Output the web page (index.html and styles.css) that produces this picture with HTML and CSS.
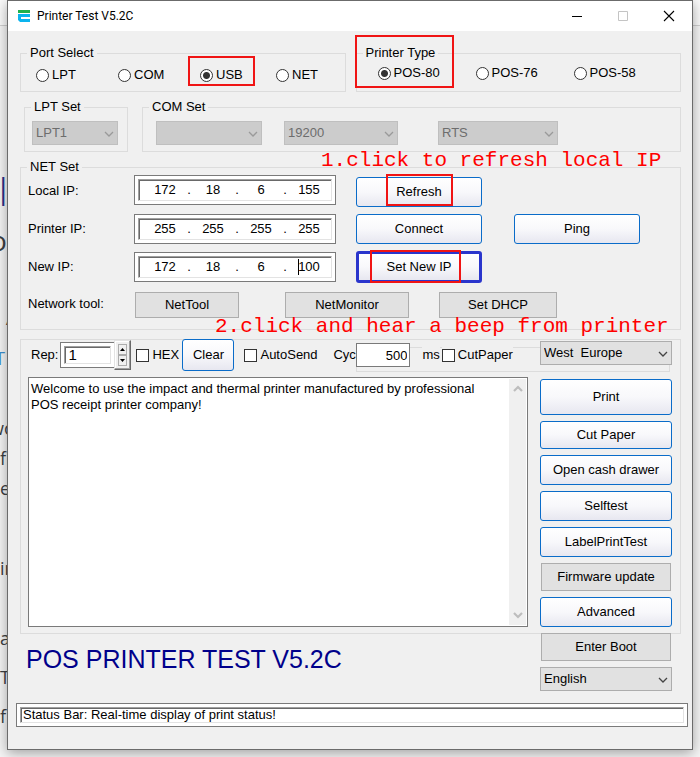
FILE: index.html
```html
<!DOCTYPE html>
<html lang="en">
<head>
<meta charset="utf-8">
<title>Printer Test V5.2C</title>
<link rel="stylesheet" href="styles.css">
</head>
<body>
<svg class="defs" aria-hidden="true">
  <symbol id="chevron" viewBox="0 0 10 6"><path d="M1 1l4 4 4-4" fill="none" stroke="currentColor" stroke-width="1.3"/></symbol>
  <symbol id="thick-chevron" viewBox="0 0 10 7"><path d="M1 1l4 4 4-4" fill="none" stroke="currentColor" stroke-width="2.2"/></symbol>
</svg>

<div class="backdrop" aria-hidden="true">
  <div class="backdrop-top"></div>
  <p class="heading">|</p>
  <p class="large">o</p>
  <p class="slash">A</p>
  <p class="link">T</p>
  <p class="para">wo<br>fi<br>e</p>
  <p class="para">in</p>
  <p class="short">a</p>
  <p class="short">T’</p>
  <p>f</p>
</div>

<main class="window">
  <header class="titlebar">
    <svg class="app-icon" viewBox="0 0 12 12" aria-hidden="true">
      <path fill="#22b14c" d="M0 0h12v3H0z"/>
      <path fill="#0cb4ee" d="M0 4h12v3H3v2h9v3H2L0 10z"/>
    </svg>
    <h1>Printer Test V5.2C</h1>
    <div class="window-buttons">
      <button type="button" aria-label="Minimize"><svg viewBox="0 0 10 10"><path d="M0 5.5h10" stroke="#000"/></svg></button>
      <button type="button" aria-label="Maximize" disabled><svg viewBox="0 0 10 10"><path d="M.5.5h9v9h-9z" fill="none" stroke="#c4c4c4"/></svg></button>
      <button type="button" aria-label="Close"><svg viewBox="0 0 10 10"><path d="M0 0l10 10M10 0L0 10" stroke="#000" stroke-width="1.1"/></svg></button>
    </div>
  </header>

  <form class="content">
    <div class="row-ports">
      <fieldset>
        <legend>Port Select</legend>
        <div class="radios ports">
          <label><input type="radio" name="port">LPT</label>
          <label><input type="radio" name="port">COM</label>
          <label><input type="radio" name="port" checked>USB<span class="mark mark-usb"></span></label>
          <label><input type="radio" name="port">NET</label>
        </div>
      </fieldset>
      <fieldset class="printer-type">
        <legend>Printer Type</legend>
        <div class="radios types">
          <label><input type="radio" name="type" checked>POS-80</label>
          <label><input type="radio" name="type">POS-76</label>
          <label><input type="radio" name="type">POS-58</label>
        </div>
        <span class="mark mark-type"></span>
      </fieldset>
    </div>

    <div class="row-sets">
      <fieldset class="lpt-set">
        <legend>LPT Set</legend>
        <div class="combos">
          <span class="combo w-lpt"><select aria-label="LPT port" disabled><option>LPT1</option></select><svg><use href="#chevron"/></svg></span>
        </div>
      </fieldset>
      <fieldset class="com-set">
        <legend>COM Set</legend>
        <div class="combos">
          <span class="combo w-com"><select aria-label="COM port" disabled><option></option></select><svg><use href="#chevron"/></svg></span>
          <span class="combo w-baud"><select aria-label="Baud rate" disabled><option>19200</option></select><svg><use href="#chevron"/></svg></span>
          <span class="combo w-flow"><select aria-label="Flow control" disabled><option>RTS</option></select><svg><use href="#chevron"/></svg></span>
        </div>
      </fieldset>
    </div>

    <fieldset class="net-set">
      <legend>NET Set</legend>
      <div class="net-rows">
        <div class="net-row first">
          <label for="local-ip">Local IP:</label>
          <div class="sunken ip"><div class="well">
            <input id="local-ip" value="172"><i>.</i><input aria-label="Local IP, part 2" value="18"><i>.</i><input aria-label="Local IP, part 3" value="6"><i>.</i><input aria-label="Local IP, part 4" value="155">
          </div></div>
          <button type="button" class="btn wide">Refresh<span class="mark mark-refresh"></span></button>
        </div>
        <div class="net-row">
          <label for="printer-ip">Printer IP:</label>
          <div class="sunken ip"><div class="well">
            <input id="printer-ip" value="255"><i>.</i><input aria-label="Printer IP, part 2" value="255"><i>.</i><input aria-label="Printer IP, part 3" value="255"><i>.</i><input aria-label="Printer IP, part 4" value="255">
          </div></div>
          <button type="button" class="btn wide">Connect</button>
          <button type="button" class="btn wide ping">Ping</button>
        </div>
        <div class="net-row">
          <label for="new-ip">New IP:</label>
          <div class="sunken ip"><div class="well">
            <input id="new-ip" value="172"><i>.</i><input aria-label="New IP, part 2" value="18"><i>.</i><input aria-label="New IP, part 3" value="6"><i>.</i><input aria-label="New IP, part 4" value="100"><span class="caret"></span>
          </div></div>
          <button type="button" class="btn wide focused">Set New IP<span class="mark mark-set"></span></button>
        </div>
        <div class="net-row tools">
          <span class="tool-label">Network tool:</span>
          <button type="button" class="btn flat nettool">NetTool</button>
          <button type="button" class="btn flat netmonitor">NetMonitor</button>
          <button type="button" class="btn flat dhcp">Set DHCP</button>
        </div>
      </div>
      <p class="note note-1">1.click to refresh local IP</p>
      <p class="note note-2">2.click and hear a beep from printer</p>
    </fieldset>

    <section class="workspace">
      <div class="frame"></div>
      <div class="editor">
        <div class="toolbar">
          <div class="cycle-frame"></div>
          <label for="rep">Rep:</label>
          <div class="rep">
            <div class="sunken"><div class="well"><input id="rep" value="1"></div></div>
            <div class="spinner">
              <button type="button" aria-label="Increase"><svg viewBox="0 0 5 3"><path d="M0 3h5L2.500 0z"/></svg></button>
              <button type="button" aria-label="Decrease"><svg viewBox="0 0 5 3"><path d="M0 0h5L2.500 3z"/></svg></button>
            </div>
          </div>
          <label class="check hex"><input type="checkbox">HEX</label>
          <button type="button" class="btn clear">Clear</button>
          <label class="check autosend"><input type="checkbox">AutoSend</label>
          <label for="cyc" class="cyc-label">Cyc</label>
          <input id="cyc" class="cyc" value="500">
          <span class="ms">ms</span>
          <label class="check cutpaper"><input type="checkbox">CutPaper</label>
        </div>
        <div class="memo">
          <textarea aria-label="Print text">Welcome to use the impact and thermal printer manufactured by professional
POS receipt printer company!</textarea>
          <div class="scroll"><svg class="up"><use href="#thick-chevron"/></svg><svg><use href="#thick-chevron"/></svg></div>
        </div>
      </div>
      <h2>POS PRINTER TEST V5.2C</h2>
      <div class="actions">
        <span class="combo code-page"><select aria-label="Code page"><option>West&nbsp; Europe</option></select><svg><use href="#chevron"/></svg></span>
        <button type="button" class="btn print">Print</button>
        <button type="button" class="btn cut">Cut Paper</button>
        <button type="button" class="btn">Open cash drawer</button>
        <button type="button" class="btn">Selftest</button>
        <button type="button" class="btn">LabelPrintTest</button>
        <button type="button" class="btn flat">Firmware update</button>
        <button type="button" class="btn">Advanced</button>
        <button type="button" class="btn flat">Enter Boot</button>
        <span class="combo"><select aria-label="Language"><option>English</option></select><svg><use href="#chevron"/></svg></span>
      </div>
    </section>
  </form>

  <footer class="sunken status"><div class="well"><input aria-label="Status" readonly value="Status Bar: Real-time display of print status!"></div></footer>
</main>
</body>
</html>
```
FILE: styles.css
```css
* { box-sizing: border-box; }

body {
  margin: 0;
  min-height: 100vh;
  background: #f5f5f5;
  color: #000;
  font: 13px/16px "Liberation Sans", Arial, sans-serif;
}

button, input, select, textarea { font: inherit; color: inherit; margin: 0; }
h1, h2, p, fieldset, legend { margin: 0; padding: 0; font-weight: normal; }
.defs { position: absolute; width: 0; height: 0; }

/* Page behind the window */
.backdrop {
  position: absolute;
  inset: 0;
  overflow: hidden;
  color: #3c4043;
  font: 18px/30px "Open Sans", sans-serif;
}
.backdrop-top { height: 26px; background: #fafafa; border-bottom: 1px solid #d0d0d0; }
.backdrop .heading { margin-top: 147px; color: #2b2f86; font-size: 30px; text-indent: -5px; }
.backdrop .large { margin-top: 22px; font-size: 28px; text-indent: -10px; }
.backdrop .slash { margin: 48px 0 10px; text-indent: 6px; }
.backdrop .link { margin: 0 0 40px; color: #3c8fd0; text-indent: -5px; }
.backdrop .para { margin-bottom: 50px; text-indent: -10px; }
.backdrop .para + .para { margin-bottom: 40px; text-indent: 0; }
.backdrop .short { margin-bottom: 9px; }

/* Window */
.window {
  position: relative;
  margin: 0 7px;
  border: 1px solid #6b6b6b;
  background: #f0f0f0;
  box-shadow: 0 3px 12px rgba(0, 0, 0, .35);
}
.titlebar { display: flex; align-items: center; height: 30px; padding-left: 10px; background: #fff; }
.app-icon { width: 12px; height: 12px; }
.titlebar h1 { flex: 1; margin-left: 7px; font: 12px/16px Roboto, sans-serif; }
.window-buttons { display: flex; }
.window-buttons button {
  display: grid; place-items: center;
  width: 46px; height: 28px; padding: 0; border: 0; background: none;
}
.window-buttons svg { width: 10px; height: 10px; overflow: visible; }
.content { padding: 14px 11px 0 12px; }

/* Groups */
fieldset { position: relative; min-width: 0; border: 1px solid #dcdcdc; }
legend { margin-left: 6px; padding: 0 3px; }
.row-ports { display: grid; grid-template-columns: 1fr 1fr; gap: 10px; }
.radios { display: grid; padding: 6px 0 8px 15px; }
.radios.ports { grid-template-columns: 82px 82px 76px 1fr; }
.radios.types { grid-template-columns: 98px 98px 1fr; padding: 4px 0 10px 21px; }
.radios label, .check { position: relative; display: flex; align-items: center; }

input[type="radio"] {
  appearance: none;
  width: 13px; height: 13px; margin-right: 3px;
  border: 1px solid #333; border-radius: 50%; background: #fff;
}
input[type="radio"]:checked { background: radial-gradient(circle, #333 3px, #fff 4px); }
input[type="checkbox"] {
  appearance: none;
  width: 13px; height: 13px; margin-right: 3px;
  border: 1px solid #333; background: #fff;
}

.row-sets { display: flex; gap: 14px; margin: 7px 0 7px 4px; }
.com-set { flex: 1; }
.combos { display: flex; padding: 6px 9px 6px 7px; }
.com-set .combos { padding-left: 13px; }

.combo { position: relative; display: block; height: 24px; }
.combo select {
  appearance: none;
  width: 100%; height: 100%; padding: 0 3px;
  border: 1px solid #adadad; border-radius: 0; background: #e1e1e1;
}
.combo select:disabled { border-color: #bfbfbf; background: #ccc; color: #6d6d6d; opacity: 1; }
.combo svg {
  position: absolute; right: 4px; top: 10px;
  width: 10px; height: 6px; color: #444; pointer-events: none;
}
.combo select:disabled + svg { color: #9a9a9a; }
.w-lpt { width: 86px; }
.w-com { width: 106px; }
.w-baud { width: 114px; margin-left: 22px; }
.w-flow { width: 120px; margin-left: 40px; }

/* Buttons */
.btn {
  position: relative;
  height: 30px; padding: 0;
  border: 1px solid #0a6cc9; border-radius: 3px;
  background: linear-gradient(#fff, #f8f8fb 50%, #e7e7f0);
}
.btn.flat { height: 26px; border-color: #adadad; border-radius: 0; background: #e1e1e1; }
.btn.wide { width: 126px; margin-left: 20px; }
.btn.ping { margin-left: 32px; }
.btn.focused { height: 32px; border: 3px solid #2a35cc; }

/* Sunken edit boxes */
.sunken { padding: 3px; border: 1px solid #7a7a7a; background: #fff; }
.well {
  position: relative;
  display: flex; align-items: center; height: 100%;
  border: 1px solid; border-color: #a0a0a0 #e3e3e3 #e3e3e3 #a0a0a0;
  box-shadow: inset 1px 1px #696969;
}
.well input { min-width: 0; padding: 0; border: 0; background: none; outline: 0; }
.ip { width: 202px; height: 30px; }
.ip .well { padding-left: 6px; }
.ip input { width: 40px; text-align: center; }
.ip i { width: 8px; text-align: center; font-style: normal; }
.caret { position: absolute; left: 159px; top: 2px; width: 1px; height: 16px; background: #000; }

/* Network settings */
.net-rows { display: grid; grid-template-rows: 32px 30px 32px 28px; gap: 7px; padding-bottom: 11px; }
.net-row { display: flex; align-items: center; padding-left: 7px; }
.net-row > label, .tool-label { width: 106px; }
.first > .ip { align-self: flex-start; }
.first > .btn { align-self: flex-end; }
.tools .btn { align-self: flex-end; }
.nettool { width: 104px; margin-left: 1px; }
.netmonitor { width: 124px; margin-left: 46px; }
.dhcp { width: 118px; margin-left: 30px; }

/* Red callouts */
.mark { position: absolute; border: 2px solid #f01414; pointer-events: none; }
.mark-usb { left: -12px; top: -11px; width: 67px; height: 30px; }
.mark-type { left: -2px; top: -26px; width: 99px; height: 53px; }
.mark-refresh { left: 29px; top: -4px; width: 67px; height: 32px; }
.mark-set { left: 11px; top: -4px; width: 91px; height: 33px; }
.note { position: absolute; color: #f00; font: 21px/24px "Liberation Mono", monospace; white-space: nowrap; }
.note-1 { left: 300px; top: -26px; }
.note-2 { left: 194px; top: 140px; }

/* Print workspace */
.workspace {
  display: grid; grid-template-columns: 1fr 132px; grid-template-rows: 295px 1fr;
  column-gap: 12px;
  margin-top: 9px; padding-right: 9px;
}
.frame { grid-area: 1 / 1 / 2 / 3; margin-right: -9px; border: 1px solid #dcdcdc; }
.editor { grid-area: 1 / 1; position: relative; padding-left: 8px; }
.toolbar { position: relative; display: flex; align-items: center; height: 32px; padding-left: 3px; }
.cycle-frame { position: absolute; left: 328px; right: -142px; top: 8px; height: 25px; border: 1px solid #dcdcdc; }
.toolbar > :not(.cycle-frame) { position: relative; }
.rep { display: flex; align-items: center; width: 71px; margin-left: 2px; }
.rep .sunken { flex: 1; height: 26px; border-right: 0; }
.rep .well { padding-left: 3px; }
.rep input { width: 100%; font-size: 15px; }
.spinner {
  display: grid; width: 17px; height: 30px; padding: 3px;
  border: 1px solid; border-color: #e3e3e3 #696969 #696969 #e3e3e3;
  box-shadow: inset -1px -1px #a0a0a0, inset 1px 1px #fff;
}
.spinner button { display: grid; place-items: center; padding: 0; border: 1px solid #adadad; background: #f0f0f0; }
.spinner svg { width: 5px; height: 3px; }
.check { background: #f0f0f0; }
.hex { width: 46px; margin-left: 5px; }
.clear { width: 52px; height: 32px; }
.autosend { width: 79px; margin-left: 10px; }
.cyc-label { width: 23px; margin-left: 10px; }
.cyc { width: 54px; height: 24px; padding: 0 2px; border: 1px solid #7a7a7a; background: #fff; text-align: right; }
.ms { margin-left: 12px; background: #f0f0f0; }
.cutpaper { margin-left: 2px; }

.memo { display: flex; height: 250px; margin-top: 6px; border: 1px solid #7a7a7a; background: #fff; padding: 1px; }
.memo textarea {
  flex: 1; min-width: 0; padding: 2px 1px; border: 0; outline: 0;
  background: none; resize: none; overflow: hidden;
}
.scroll { display: flex; flex-direction: column; justify-content: space-between; align-items: center; width: 17px; padding: 6px 0; background: #f0f0f0; }
.scroll svg { width: 10px; height: 7px; color: #bdbdbd; }
.scroll .up { transform: rotate(180deg); }

h2 { grid-area: 2 / 1; margin-left: 6px; padding-top: 10px; color: #00008b; font-size: 25px; line-height: 30px; }

.actions { grid-area: 1 / 2 / 3 / 3; position: relative; display: flex; flex-direction: column; gap: 6px; padding-top: 2px; }
.code-page { margin-bottom: 8px; }
.print { height: 36px; }
.cut { height: 28px; }
.actions .flat { height: 28px; margin: 0 1px; }

/* Status bar */
.status { height: 24px; margin: 12px 4px 22px 8px; }
.status .well { padding-left: 2px; }
.status input { flex: 1; }
```
